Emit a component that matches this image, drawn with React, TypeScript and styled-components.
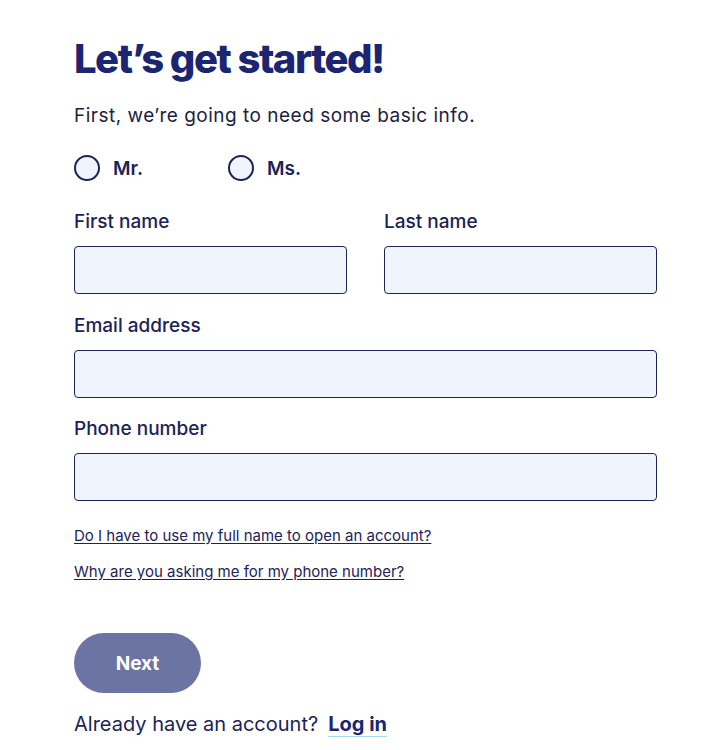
import React, { FC } from 'react'
import styled, { createGlobalStyle } from 'styled-components'

//CSS
const GlobalStyle = createGlobalStyle`
    body {
        margin: 0;
        background: #fff;
        font-family: Inter, "Noto Sans", sans-serif;
        color: #1c2359;
    }
`
const StyledMain = styled.main`
    display: flex;
    flex-direction: column;
    width: 583px;
    padding: 33px 0 0 74px;
`
const StyledH1 = styled.h1`
    margin: 0;
    font-size: 40px;
    line-height: 52px;
    font-weight: 800;
    letter-spacing: -1.5px;
    color: #1b2571;
`
const StyledIntro = styled.p`
    margin: 19px 0 0;
    font-size: 19px;
    line-height: 24px;
    font-weight: 400;
    letter-spacing: 0.5px;
    color: #1c2240;
`
const StyledRadios = styled.div`
    display: flex;
    margin-top: 27px;
`
const StyledRadio = styled.label`
    display: flex;
    align-items: center;
    gap: 13px;
    width: 154px;
    font-size: 19px;
    font-weight: 600;
    color: #1c2359;
`
const StyledCircle = styled.span`
    width: 22px;
    height: 22px;
    border: 2px solid #1c2359;
    border-radius: 50%;
    background: #f0f5fd;
`
const StyledRow = styled.div`
    display: grid;
    grid-template-columns: 1fr 1fr;
    gap: 37px;
    margin-top: 29px;
`
const StyledField = styled.div<{ $top?: number }>`
    display: flex;
    flex-direction: column;
    margin-top: ${p => p.$top ?? 0}px;
`
const StyledLabel = styled.label`
    font-size: 19px;
    line-height: 24px;
    font-weight: 500;
    color: #1c2359;
    margin-bottom: 12px;
`
const StyledInput = styled.input`
    box-sizing: border-box;
    height: 48px;
    width: 100%;
    border: 1px solid #1c2359;
    border-radius: 4px;
    background: #f0f5fd;
    &:focus {
        outline: none;
    }
`
const StyledLinks = styled.div`
    display: flex;
    flex-direction: column;
    gap: 17px;
    margin-top: 25px;
`
const StyledLink = styled.a`
    font-size: 15px;
    line-height: 19px;
    color: #1c2359;
    text-decoration: underline;
    text-underline-offset: 2px;
    align-self: flex-start;
`
const StyledButton = styled.button`
    margin-top: 52px;
    width: 127px;
    height: 60px;
    border: 0;
    border-radius: 30px;
    background: #6b74a3;
    color: #fff;
    font-family: inherit;
    font-size: 19px;
    font-weight: 700;
    cursor: pointer;
`
const StyledFooter = styled.p`
    margin: 18px 0 0;
    font-size: 20px;
    line-height: 26px;
    color: #1c2359;
`
const StyledLogin = styled.a`
    display: inline-block;
    margin-left: 10px;
    font-weight: 700;
    line-height: 24px;
    color: #1b2571;
    text-decoration: none;
    border-bottom: 1px solid #a9dcf2;
`

const App: FC = () => {
    return (
        <React.Fragment>
            <GlobalStyle />
            <StyledMain>
                <StyledH1>Let’s get started!</StyledH1>
                <StyledIntro>First, we’re going to need some basic info.</StyledIntro>
                <StyledRadios>
                    <StyledRadio><StyledCircle />Mr.</StyledRadio>
                    <StyledRadio><StyledCircle />Ms.</StyledRadio>
                </StyledRadios>
                <StyledRow>
                    <StyledField>
                        <StyledLabel>First name</StyledLabel>
                        <StyledInput type="text" />
                    </StyledField>
                    <StyledField>
                        <StyledLabel>Last name</StyledLabel>
                        <StyledInput type="text" />
                    </StyledField>
                </StyledRow>
                <StyledField $top={20}>
                    <StyledLabel>Email address</StyledLabel>
                    <StyledInput type="email" />
                </StyledField>
                <StyledField $top={19}>
                    <StyledLabel>Phone number</StyledLabel>
                    <StyledInput type="tel" />
                </StyledField>
                <StyledLinks>
                    <StyledLink href="#">Do I have to use my full name to open an account?</StyledLink>
                    <StyledLink href="#">Why are you asking me for my phone number?</StyledLink>
                </StyledLinks>
                <StyledButton type="button">Next</StyledButton>
                <StyledFooter>
                    Already have an account?<StyledLogin href="#">Log in</StyledLogin>
                </StyledFooter>
            </StyledMain>
        </React.Fragment>
    )
}
export default App
